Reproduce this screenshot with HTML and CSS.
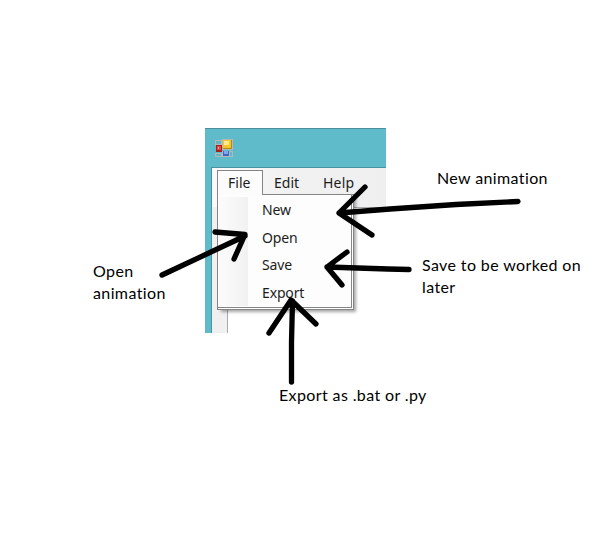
FILE: index.html
```html
<!DOCTYPE html>
<html lang="en">
<head>
<meta charset="utf-8">
<title>File menu</title>
<link rel="stylesheet" href="styles.css">
</head>
<body>
<main class="canvas">
  <section class="window">
    <header class="titlebar">
      <svg class="app-icon" width="18" height="18" viewBox="0 0 18 18">
        <path fill="#b2b9bb" d="M0 1h7v5H0zM0 14h7v4H0zM7 12h11v6H7zM7 0h11v11H7z"/>
        <path fill="#67b5c3" d="M1 2h5v3H1zM1 15h5v2H1zM15 13h2v4h-2z"/>
        <path fill="#a81f20" d="M1 6h6v7H1z"/><path fill="#d84c40" d="M2 7h4v4H2z"/><path fill="#f4a090" d="M3 8h1v2H3z"/>
        <path fill="#b58618" d="M8 1h9v9H8z"/><path fill="#f5c62b" d="M8 1h8v8H8z"/><path fill="#ffe98c" d="M9 2h5v4H9z"/>
        <path fill="#3e67c5" d="M8 12h6v5H8z"/><path fill="#7ea6f5" d="M9 12h4v3H9z"/>
      </svg>
    </header>
    <div class="client">
      <nav class="menubar">
        <span class="tab open">File</span>
        <span class="tab edit">Edit</span>
        <span class="tab help">Help</span>
      </nav>
      <div class="document"></div>
      <ul class="dropdown">
        <li>New</li>
        <li>Open</li>
        <li>Save</li>
        <li>Export</li>
      </ul>
    </div>
  </section>
  <svg class="arrows" width="606" height="542" viewBox="0 0 606 542">
    <path d="M518 201.500L456 204.500L390 209L339 213M365 187L339 213L372 235"/>
    <path d="M162 275L245 236M215 232L245 234.500L234 259"/>
    <path d="M409 269.500L388 269L327 267M347 252L327 267L342 285"/>
    <path d="M291.500 382V342L292.500 301M269 333L291 300L316 324"/>
  </svg>
  <p class="note note-new"><span>New animation</span></p>
  <p class="note note-open"><span>Open</span><br><span>animation</span></p>
  <p class="note note-save"><span>Save to be worked on</span><br><span>later</span></p>
  <p class="note note-export"><span>Export as .bat or .py</span></p>
</main>
</body>
</html>
```
FILE: styles.css
```css
* { box-sizing: border-box; }
body { margin: 0; background: #fff; }
.canvas { position: relative; width: 606px; height: 542px; overflow: hidden; background: #fff; }

.window {
  position: absolute; left: 205px; top: 128px; width: 181px; height: 205px;
  padding-left: 6px; background: #5fbac9; border-top: 1px solid #4a8f9b;
  font: 14px/18px "Noto Sans", "Open Sans", sans-serif; color: #1c1c1c;
}
.titlebar { height: 38px; padding: 10px 0 0 4px; }
.app-icon { display: block; }
.client {
  position: relative; height: 166px; display: flex; flex-direction: column;
  background: #f0f0f0; border-top: 1px solid #4993a0; border-left: 1px solid #4993a0;
}
.menubar {
  display: flex; height: 39px; padding: 2px 0 0 5px;
  background: linear-gradient(90deg, #fafafa, #f1f1f1 45%, #efefef);
}
.tab { height: 25px; padding-top: 3px; }
.open { width: 46px; padding-left: 10px; background: #fcfcfc; border: 1px solid #858585; border-bottom: 0; }
.edit { padding-top: 4px; margin-left: 11px; width: 49px; }
.help { padding-top: 4px; letter-spacing: .2px; }
.document { flex: 1; margin-left: 15px; background: #fff; border: 1px solid #a9a9b0; border-width: 1px 0 0 1px; }
.dropdown {
  position: absolute; left: 5px; top: 26px; width: 137px; height: 116px;
  margin: 0; padding: 2px 0 0 44px; list-style: none;
  border: 1px solid #858585; border-right-width: 3px; border-bottom-width: 3px;
  border-right-style: double; border-bottom-style: double;
  background: linear-gradient(90deg, #fcfcfc, #f1f1f1) 1px 2px / 29px 109px no-repeat, #fdfdfd;
  box-shadow: 3px 3px 3px -1px rgba(0, 0, 0, .35);
}
.dropdown::before { content: ""; position: absolute; left: 0; top: -1px; width: 44px; height: 1px; background: #fcfcfc; }
.dropdown li { height: 27.5px; padding-top: 4px; letter-spacing: -.15px; }

.arrows { position: absolute; inset: 0; fill: none; stroke: #000; stroke-width: 5.3; stroke-linecap: round; stroke-linejoin: round; }
.note { position: absolute; margin: 0; font: 16px/22px Lato, sans-serif; color: #000; white-space: nowrap; font-variant-ligatures: none; letter-spacing: .38px; }
.note-new { left: 437px; top: 167px; }
.note-open { left: 93px; top: 260px; }
.note-save { left: 422px; top: 254px; }
.note-export { left: 279px; top: 384px; }
```
